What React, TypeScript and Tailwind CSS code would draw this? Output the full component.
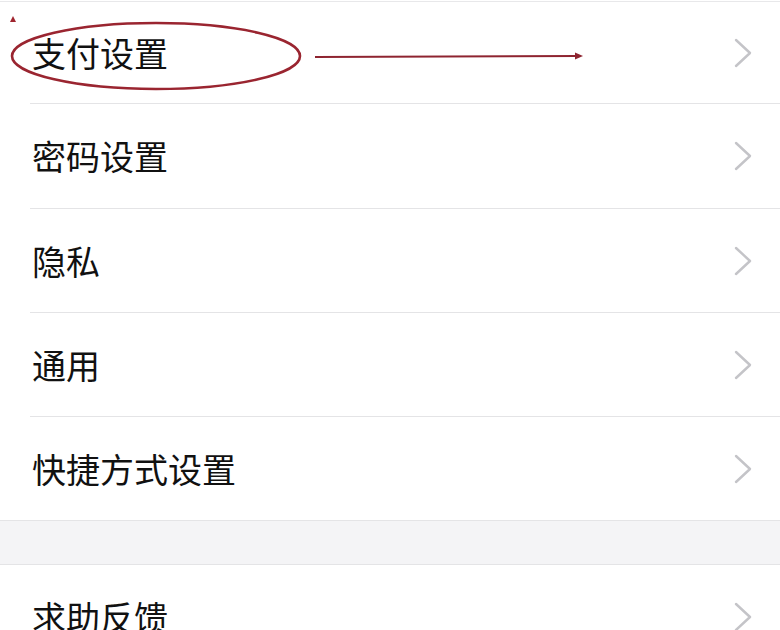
const groupOne = [
  { label: '支付设置', h: 'h-[102px]' },
  { label: '密码设置', h: 'h-[105px]' },
  { label: '隐私', h: 'h-[104px]' },
  { label: '通用', h: 'h-[104px]' },
  { label: '快捷方式设置', h: 'h-[103px]' },
];

function Chevron() {
  return (
    <svg width="20" height="30" viewBox="0 0 20 30" fill="none">
      <polyline points="3,2 17,15 3,28" stroke="#c4c4c8" strokeWidth="2.4" strokeLinecap="round" strokeLinejoin="round" />
    </svg>
  );
}

function Row({ label, h, last }: { label: string; h: string; last?: boolean }) {
  return (
    <div className="pl-[30px]">
      <div
        className={`flex items-center justify-between pr-[27px] ${h} ${last ? '' : 'border-b border-[#e4e4e6]'}`}
      >
        <span className="text-[34px] leading-none text-[#111] pl-[2px]">{label}</span>
        <Chevron />
      </div>
    </div>
  );
}

export default function App() {
  return (
    <div
      className="relative w-[780px] h-[630px] overflow-hidden bg-white"
      style={{ fontFamily: '"Noto Sans CJK SC", "Noto Sans", sans-serif' }}
    >
      <div className="mt-px border-t border-[#e8e8ea]" />
      <div className="border-b border-[#e4e4e6]">
        {groupOne.map((r, i) => (
          <Row key={r.label} label={r.label} h={r.h} last={i === groupOne.length - 1} />
        ))}
      </div>
      <div className="h-[44px] bg-[#f4f4f6] border-b border-[#e4e4e6]" />
      <Row label="求助反馈" h="h-[104px]" last />

      {/* red annotation marks */}
      <svg className="absolute inset-0 pointer-events-none" width="780" height="630" viewBox="0 0 780 630">
        <polygon points="13,16 16,22 10,22" fill="#a0252f" />
        <ellipse cx="156" cy="56" rx="144" ry="33" fill="none" stroke="#9a2530" strokeWidth="2.6" />
        <line x1="315" y1="57" x2="578" y2="56" stroke="#8e2430" strokeWidth="2.2" />
        <polygon points="583,56 575,52.5 575,59.5" fill="#8e2430" />
      </svg>
    </div>
  );
}
